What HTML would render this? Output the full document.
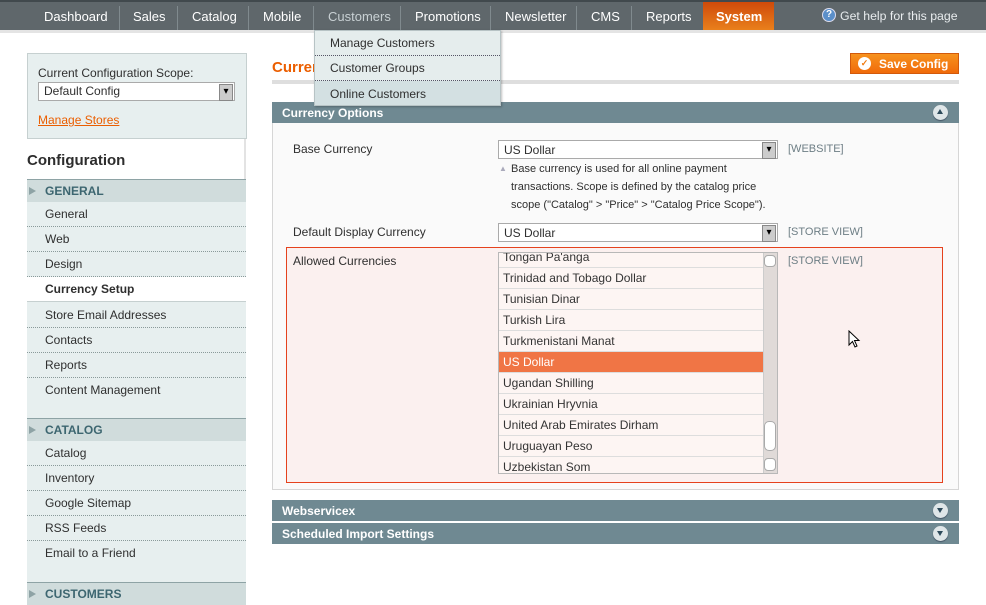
<!DOCTYPE html>
<html><head><meta charset="utf-8"><style>
*{margin:0;padding:0;box-sizing:border-box}
body{width:986px;height:605px;position:relative;overflow:hidden;background:#fff;font-family:"Liberation Sans",Arial,sans-serif;font-size:12px;color:#2f2f2f}
.a{position:absolute;white-space:nowrap}
#nav{position:absolute;left:0;top:0;width:986px;height:30px;background:#5f676b;border-top:2px solid #41494d}
#nav .i{position:absolute;top:7px;color:#fff;font-size:13px}
#nav .s{position:absolute;top:4px;width:1px;height:24px;background:#808a8e}
.sb{position:absolute;left:27px;width:220px;background:#e7efef;border-right:1px solid #c6d0d0}
.it{position:absolute;left:27px;width:219px;height:25px;padding:5px 0 0 18px;border-bottom:1px dotted #8a9a9a;font-size:12px;color:#2f2f2f;background:#e7efef}
.hd{position:absolute;left:27px;width:219px;height:23px;background:#d0dcdc;border-top:1px solid #8ea3a5;font-weight:bold;color:#3d6670;padding:4px 0 0 18px;font-size:12px}
.hd:before{content:"";position:absolute;left:2px;top:7px;border-left:7px solid #8ea3a5;border-top:4px solid transparent;border-bottom:4px solid transparent}
.bar{position:absolute;left:272px;width:687px;height:21px;background:#6f8992;color:#fff;font-weight:bold;padding:4px 0 0 10px}
.tg{position:absolute;right:11px;top:3px;width:15px;height:15px;border-radius:50%;background:#dfe6e8;box-shadow:0 1px 1px #456}
.tg:after{content:"";position:absolute;left:4px;top:5px;border-left:3.5px solid transparent;border-right:3.5px solid transparent;border-top:5px solid #2d4a5a}
.tg.up:after{border-top:none;border-bottom:5px solid #2d4a5a;top:4px}
.sel{position:absolute;height:19px;background:#fff;border:1px solid #aaa;padding:2px 5px;font-size:12px}
.sel:after{content:"▾";position:absolute;right:1px;top:1px;width:12px;height:15px;background:#ccc;border:1px solid #888;font-size:10px;text-align:center;line-height:14px;color:#000}
.sc{position:absolute;left:788px;color:#6d7e85;font-size:11px}
.li{height:21px;border-bottom:1px solid #ddd;padding:3px 4px;font-size:12px;color:#333}
</style></head><body>
<div id="nav">
<span class="i" style="left:44px">Dashboard</span><span class="s" style="left:119px"></span>
<span class="i" style="left:133px">Sales</span><span class="s" style="left:177px"></span>
<span class="i" style="left:192px">Catalog</span><span class="s" style="left:248px"></span>
<span class="i" style="left:263px">Mobile</span><span class="s" style="left:313px"></span>
<span class="i" style="left:328px;color:#c8d0d3">Customers</span><span class="s" style="left:400px"></span>
<span class="i" style="left:415px">Promotions</span><span class="s" style="left:490px"></span>
<span class="i" style="left:505px">Newsletter</span><span class="s" style="left:576px"></span>
<span class="i" style="left:591px">CMS</span><span class="s" style="left:631px"></span>
<span class="i" style="left:646px">Reports</span>
<div style="position:absolute;left:703px;top:0;width:71px;height:28px;background:linear-gradient(#cf4a0a,#e9801c)"></div>
<span class="i" style="left:716px;font-weight:bold">System</span>
<div style="position:absolute;left:822px;top:6px;width:14px;height:14px;border-radius:50%;background:#5b8fc9;border:1px solid #dde;color:#fff;font-size:10px;font-weight:bold;text-align:center;line-height:12px">?</div>
<span class="i" style="left:840px;color:#e8ecee;font-size:12.3px">Get help for this page</span>
</div>
<div class="a" style="left:0;top:30px;width:986px;height:3px;background:#e4e4e4"></div>

<div class="sb" style="top:53px;height:86px;border:1px solid #c6d0d0"></div>
<span class="a" style="left:38px;top:66px">Current Configuration Scope:</span>
<div class="sel" style="left:38px;top:82px;width:197px;padding-top:1px">Default Config</div>
<span class="a" style="left:38px;top:113px;color:#eb5e00;text-decoration:underline">Manage Stores</span>
<div class="a" style="left:27px;top:139px;width:219px;height:40px;background:#fff;border-right:2px solid #e3e3e3"></div>
<span class="a" style="left:27px;top:152px;font-size:15px;font-weight:bold;color:#2d2d2d">Configuration</span>

<div class="hd" style="top:179px">GENERAL</div>
<div class="it" style="top:202px">General</div>
<div class="it" style="top:227px">Web</div>
<div class="it" style="top:252px">Design</div>
<div class="it" style="top:277px;background:#fff;font-weight:bold;border-bottom:1px solid #c6d0d0">Currency Setup</div>
<div class="it" style="top:302px;height:26px;padding-top:6px">Store Email Addresses</div>
<div class="it" style="top:328px">Contacts</div>
<div class="it" style="top:353px">Reports</div>
<div class="it" style="top:378px;height:40px;border:none">Content Management</div>
<div class="hd" style="top:418px">CATALOG</div>
<div class="it" style="top:441px;height:25px">Catalog</div>
<div class="it" style="top:466px">Inventory</div>
<div class="it" style="top:491px">Google Sitemap</div>
<div class="it" style="top:516px">RSS Feeds</div>
<div class="it" style="top:541px;height:41px;border:none">Email to a Friend</div>
<div class="hd" style="top:582px">CUSTOMERS</div>

<span class="a" style="left:272px;top:59px;font-size:15px;font-weight:bold;color:#eb5e00">Currency Setup</span>
<div class="a" style="left:272px;top:80px;width:687px;height:4px;background:#dedede"></div>
<div class="a" style="left:850px;top:53px;width:109px;height:21px;background:linear-gradient(#f7921e,#f06a0a);border:1px solid #d2590b;color:#fff;font-weight:bold;padding:3px 0 0 28px">Save Config</div>
<div class="a" style="left:858px;top:57px;width:13px;height:13px;border-radius:50%;background:#fff;color:#f07a10;font-size:9px;text-align:center;line-height:13px;font-weight:bold">✓</div>

<div class="bar" style="top:102px">Currency Options<div class="tg up"></div></div>
<div class="a" style="left:272px;top:123px;width:687px;height:367px;background:#fafafa;border:1px solid #d6d6d6;border-top:none"></div>
<span class="a" style="left:293px;top:142px">Base Currency</span>
<div class="sel" style="left:498px;top:140px;width:280px">US Dollar</div>
<span class="sc" style="top:143px">[WEBSITE]</span>
<div class="a" style="left:499px;top:160px;font-size:11px;line-height:18px;white-space:normal;width:280px;padding-left:12px"><span style="position:absolute;left:0;top:0;color:#aab;font-size:8px">▲</span>Base currency is used for all online payment transactions. Scope is defined by the catalog price scope ("Catalog" &gt; "Price" &gt; "Catalog Price Scope").</div>
<span class="a" style="left:293px;top:225px">Default Display Currency</span>
<div class="sel" style="left:498px;top:223px;width:280px">US Dollar</div>
<span class="sc" style="top:226px">[STORE VIEW]</span>

<div class="a" style="left:286px;top:247px;width:657px;height:236px;background:#fbf0ef;border:1px solid #e5421d"></div>
<span class="a" style="left:293px;top:254px">Allowed Currencies</span>
<span class="sc" style="top:255px">[STORE VIEW]</span>
<div class="a" style="left:498px;top:252px;width:280px;height:222px;border:1px solid #b8b8b8;background:#fdf5f3;overflow:hidden">
<div style="position:absolute;left:0;top:-6px;width:265px">
<div class="li">Tongan Pa'anga</div><div class="li">Trinidad and Tobago Dollar</div><div class="li">Tunisian Dinar</div><div class="li">Turkish Lira</div><div class="li">Turkmenistani Manat</div>
<div class="li" style="background:#f07545;color:#fff">US Dollar</div>
<div class="li">Ugandan Shilling</div><div class="li">Ukrainian Hryvnia</div><div class="li">United Arab Emirates Dirham</div><div class="li">Uruguayan Peso</div><div class="li">Uzbekistan Som</div></div>
<div style="position:absolute;right:0;top:0;width:14px;height:220px;background:#e0dad8;border-left:1px solid #ccc"></div>
<div style="position:absolute;right:1px;top:2px;width:12px;height:12px;background:#fff;border:1px solid #aaa;border-radius:4px"></div>
<div style="position:absolute;right:1px;top:168px;width:12px;height:30px;background:#fff;border:1px solid #aaa;border-radius:5px"></div>
<div style="position:absolute;right:1px;top:205px;width:12px;height:13px;background:#fff;border:1px solid #aaa;border-radius:4px"></div>
</div>
<svg class="a" style="left:848px;top:330px" width="14" height="20" viewBox="0 0 14 20"><path d="M1 1 L1 15 L4.5 11.5 L7 17 L9 16 L6.5 10.5 L11 10.5 Z" fill="#fff" stroke="#000" stroke-width="1"/></svg>

<div class="bar" style="top:500px">Webservicex<div class="tg"></div></div>
<div class="bar" style="top:523px">Scheduled Import Settings<div class="tg"></div></div>

<div class="a" style="left:314px;top:30px;width:187px;height:76px;background:#e5eded;border:1px solid #b7c3c5;box-shadow:1px 1px 2px rgba(0,0,0,.25)">
<div style="height:25px;padding:5px 0 0 15px;border-bottom:1px dotted #556;font-size:12px">Manage Customers</div>
<div style="height:25px;padding:5px 0 0 15px;border-bottom:1px dotted #556;font-size:12px">Customer Groups</div>
<div style="height:24px;padding:6px 0 0 15px;background:#d3e0e2;font-size:12px">Online Customers</div>
</div>
</body></html>
